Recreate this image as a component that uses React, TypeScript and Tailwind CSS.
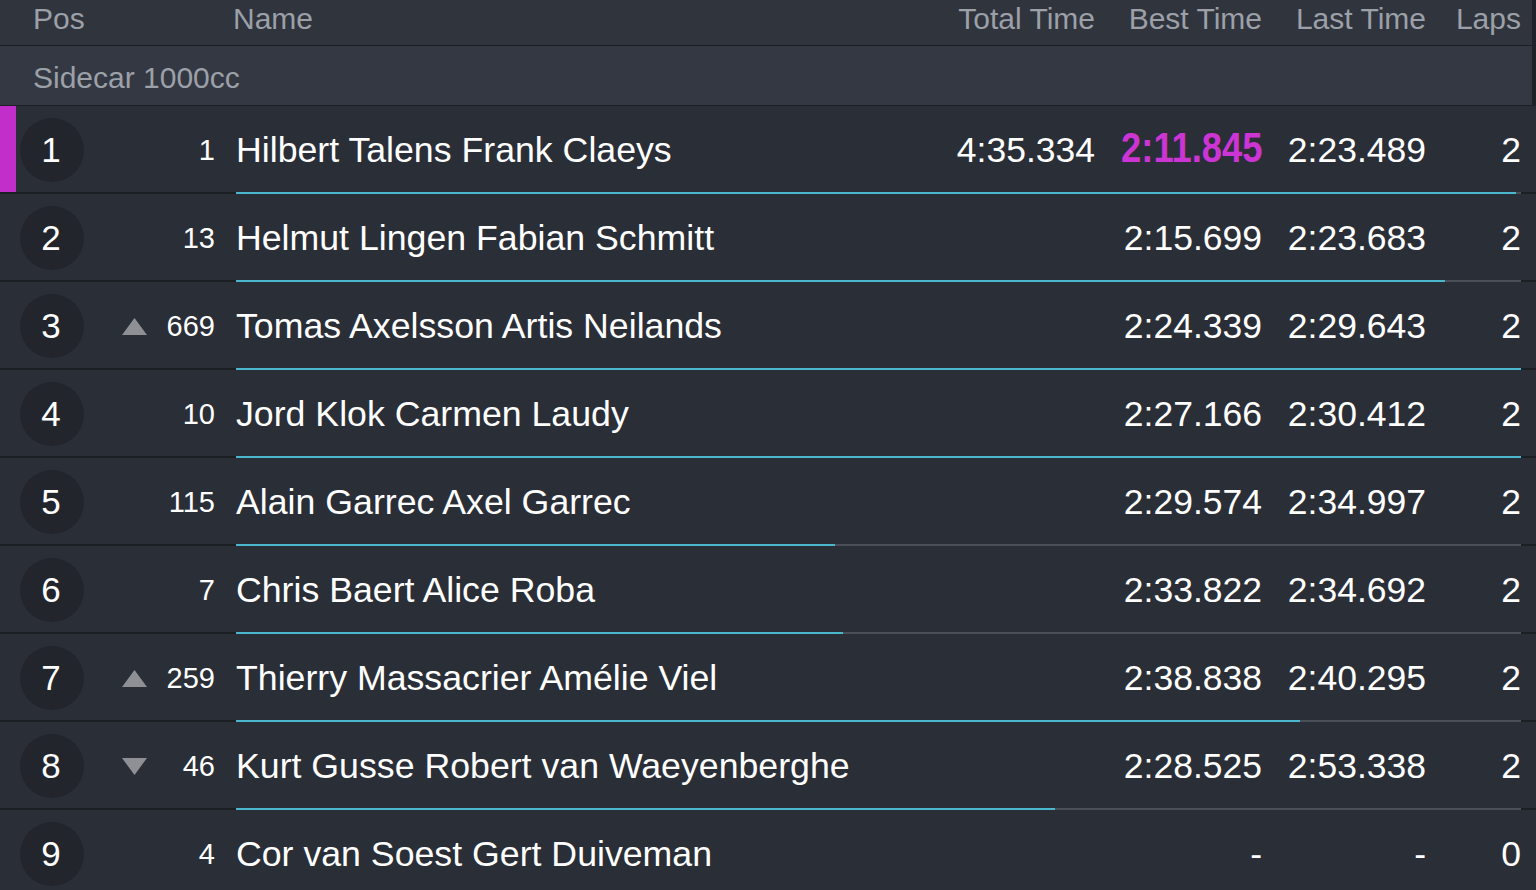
import React from "react";

type Row = {
  pos: number;
  num: string;
  trend?: "up" | "down";
  name: string;
  total: string;
  best: string;
  last: string;
  laps: string;
  progress: number;
  leader?: boolean;
};

const rows: Row[] = [
  { pos: 1, num: "1", name: "Hilbert Talens Frank Claeys", total: "4:35.334", best: "2:11.845", last: "2:23.489", laps: "2", progress: 0.996, leader: true },
  { pos: 2, num: "13", name: "Helmut Lingen Fabian Schmitt", total: "", best: "2:15.699", last: "2:23.683", laps: "2", progress: 0.941 },
  { pos: 3, num: "669", trend: "up", name: "Tomas Axelsson Artis Neilands", total: "", best: "2:24.339", last: "2:29.643", laps: "2", progress: 1 },
  { pos: 4, num: "10", name: "Jord Klok Carmen Laudy", total: "", best: "2:27.166", last: "2:30.412", laps: "2", progress: 1 },
  { pos: 5, num: "115", name: "Alain Garrec Axel Garrec", total: "", best: "2:29.574", last: "2:34.997", laps: "2", progress: 0.466 },
  { pos: 6, num: "7", name: "Chris Baert Alice Roba", total: "", best: "2:33.822", last: "2:34.692", laps: "2", progress: 0.472 },
  { pos: 7, num: "259", trend: "up", name: "Thierry Massacrier Amélie Viel", total: "", best: "2:38.838", last: "2:40.295", laps: "2", progress: 0.828 },
  { pos: 8, num: "46", trend: "down", name: "Kurt Gusse Robert van Waeyenberghe", total: "", best: "2:28.525", last: "2:53.338", laps: "2", progress: 0.637 },
  { pos: 9, num: "4", name: "Cor van Soest Gert Duiveman", total: "", best: "-", last: "-", laps: "0", progress: 0 },
];

function Trend({ dir }: { dir?: "up" | "down" }) {
  if (!dir) return <div className="w-[25px]" />;
  return (
    <svg width="25" height="17" viewBox="0 0 25 17" className="shrink-0">
      {dir === "up" ? (
        <polygon points="12.5,0 25,17 0,17" fill="#8e9096" />
      ) : (
        <polygon points="0,0 25,0 12.5,17" fill="#8e9096" />
      )}
    </svg>
  );
}

function RaceRow({ r }: { r: Row }) {
  return (
    <div className="flex flex-col bg-[#2a2e37]">
      <div className="flex h-[86px] items-center">
        <div className={`h-full w-[16px] shrink-0 ${r.leader ? "bg-[#c22ec9]" : ""}`} />
        <div className="ml-[4px] mt-[2px] flex h-[64px] w-[64px] shrink-0 items-center justify-center rounded-full bg-[#22252c] pr-[2px] text-[35px] text-white">
          {r.pos}
        </div>
        <div className="flex flex-1 items-center pt-[4px]">
          <div className="w-[38px] shrink-0" />
          <Trend dir={r.trend} />
          <div className="w-[68px] shrink-0 text-right text-[29px] text-white">{r.num}</div>
          <div className="ml-[21px] min-w-0 flex-1 whitespace-nowrap text-[35.7px] text-white">{r.name}</div>
          <div className="w-[150px] shrink-0 text-right text-[35.5px] text-white">{r.total}</div>
          <div className="w-[167px] shrink-0 text-right text-[35.5px] text-white">
            {r.leader ? (
              <span className="inline-block origin-right scale-x-[0.865] text-[42px] font-bold leading-none text-[#cc35d4]">
                {r.best}
              </span>
            ) : (
              r.best
            )}
          </div>
          <div className="w-[164px] shrink-0 text-right text-[35.5px] text-white">{r.last}</div>
          <div className="w-[95px] shrink-0 text-right text-[35.5px] text-white">{r.laps}</div>
          <div className="w-[15px] shrink-0" />
        </div>
      </div>
      <div className="flex h-[2px]">
        <div className="w-[236px] shrink-0 bg-[#1c1f24]" />
        <div className="flex flex-1 bg-[#4b4f58]">
          <div className="h-full bg-[#4ab8cc]" style={{ width: `${r.progress * 100}%` }} />
        </div>
        <div className="w-[15px] shrink-0 bg-[#1c1f24]" />
      </div>
    </div>
  );
}

export default function App() {
  return (
    <div
      className="h-[890px] w-[1536px] overflow-hidden bg-[#2a2e37]"
      style={{ fontFamily: '"Liberation Sans", Arial, sans-serif' }}
    >
      <div className="flex bg-[#1f2228]">
        <div className="flex flex-1 flex-col">
          <div className="flex h-[45px] items-center bg-[#30343d] pb-[8px] text-[30px] text-[#9ca0a8]">
            <div className="w-[233px] shrink-0 pl-[33px]">Pos</div>
            <div className="flex-1">Name</div>
            <div className="w-[150px] shrink-0 text-right">Total Time</div>
            <div className="w-[167px] shrink-0 text-right">Best Time</div>
            <div className="w-[164px] shrink-0 text-right">Last Time</div>
            <div className="w-[95px] shrink-0 text-right">Laps</div>
            <div className="w-[11px] shrink-0" />
          </div>
          <div className="h-[1px] bg-[#1c1f24]" />
          <div className="flex h-[59px] items-center bg-[#343842] pl-[33px] pt-[4px] text-[30px] text-[#9ca0a8]">
            Sidecar 1000cc
          </div>
          <div className="h-[1px] bg-[#1c1f24]" />
        </div>
        <div className="w-[4px] shrink-0" />
      </div>
      {rows.map((r) => (
        <RaceRow key={r.pos} r={r} />
      ))}
    </div>
  );
}
